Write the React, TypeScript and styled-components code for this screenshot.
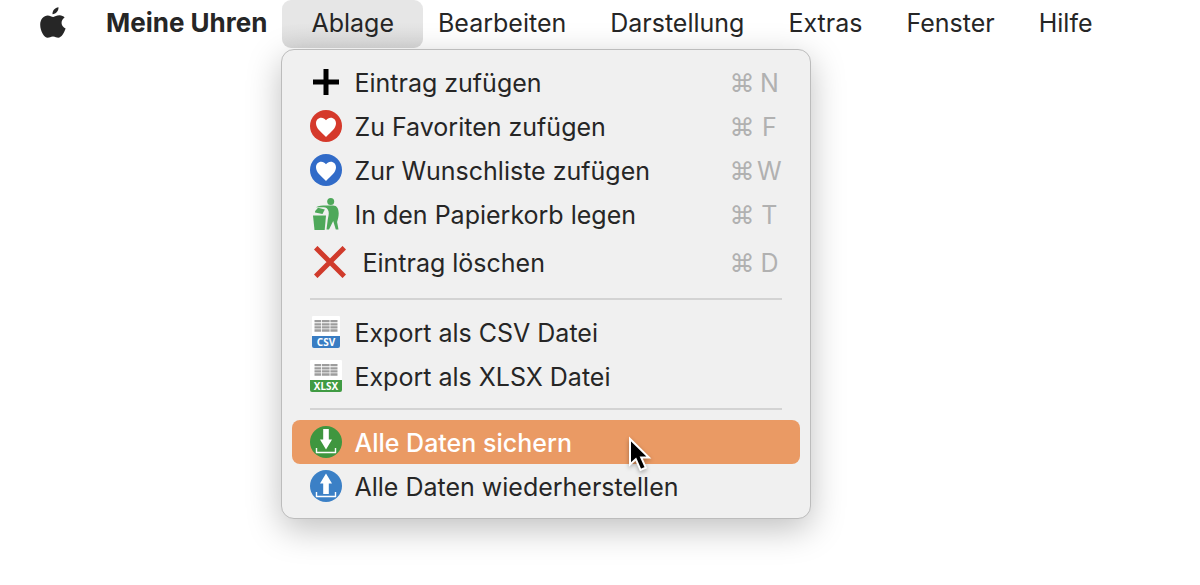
import React from "react";
import styled, { createGlobalStyle, css } from "styled-components";

const GlobalStyle = createGlobalStyle`
  *, *::before, *::after { box-sizing: border-box; }
  body {
    margin: 0;
    background: #fff;
    color: #262626;
    font-family: Inter, "Liberation Sans", sans-serif;
    font-size: 25px;
    line-height: 32px;
  }
  button { font: inherit; color: inherit; border: 0; background: none; }
`;

const Page = styled.main`
  min-height: 100vh;
`;

const MenuBar = styled.nav`
  display: flex;
  align-items: center;
  height: 48px;
  padding-left: 18px;
`;

const MenuSlot = styled.div`
  position: relative;
  height: 100%;
`;

const MenuTitle = styled.button<{ $bold?: boolean; $open?: boolean }>`
  display: flex;
  align-items: center;
  height: 100%;
  padding: 0 22px 2px;
  white-space: nowrap;
  ${(p) =>
    p.$bold &&
    css`
      font-size: 26px;
      font-weight: 700;
    `}
  ${(p) =>
    p.$open &&
    css`
      margin: 0 -7px;
      padding: 0 29px 2px;
      border-radius: 9px;
      background: linear-gradient(#e6e6e6 50%, #d9d9d9);
    `}
`;

const LogoButton = styled(MenuTitle)`
  padding-right: 18px;
`;

const Panel = styled.div`
  position: absolute;
  top: calc(100% + 1px);
  left: -8px;
  z-index: 1;
  width: 530px;
  padding: 10px;
  border: 1px solid #bcbcbc;
  border-radius: 13px;
  background: #f0f0f0;
  box-shadow: 0 10px 34px rgba(0, 0, 0, 0.25);
`;

const Entry = styled.button<{ $tall?: boolean; $active?: boolean }>`
  display: flex;
  align-items: center;
  gap: 12px;
  width: 100%;
  height: ${(p) => (p.$tall ? 52 : 44)}px;
  padding: 0 18px;
  border-radius: 8px;
  text-align: left;
  white-space: nowrap;
  ${(p) =>
    p.$active &&
    css`
      background: #ea9a64;
      color: #fff;
      font-weight: 500;
    `}
`;

const IconBox = styled.span<{ $wide?: boolean }>`
  display: flex;
  flex: none;
  justify-content: center;
  width: ${(p) => (p.$wide ? 40 : 32)}px;
  svg { display: block; }
`;

const EntryLabel = styled.span`
  flex: 1;
  padding-top: 2px;
`;

const Shortcut = styled.kbd`
  display: flex;
  align-items: center;
  gap: 2px;
  padding-top: 2px;
  color: #b1b1b1;
  font-family: inherit;
  font-size: 25px;
`;

const KeyLetter = styled.span`
  width: 26px;
  text-align: center;
`;

const Separator = styled.hr`
  height: 2px;
  margin: 10px 18px;
  border: 0;
  background: #d3d3d3;
`;

const Pointer = styled.svg`
  position: absolute;
  top: 385px;
  left: 345px;
  filter: drop-shadow(0 2px 2px rgba(0, 0, 0, 0.3));
  pointer-events: none;
`;

const AppleLogo = () => (
  <svg width="26" height="32" viewBox="1 0 26 32" fill="#262626" aria-hidden="true">
    <path d="M19.500 .3c.2 3.700-2.700 6.900-6 6.900C13.200 3.800 16 .7 19.500 .3Z" />
    <path d="M25.600 10.600c-4.500 2.800-3.800 9.100 1 11-1.400 4.200-4.200 9.200-7.300 9.200-2 0-2.800-1.300-5.300-1.300-2.500 0-3.400 1.300-5.300 1.300C5.400 30.800 1.200 24.100 1.200 17.700c0-5.800 3.700-9.300 7.500-9.300 2.300 0 3.900 1.500 5.600 1.500 1.600 0 3.400-1.600 6.300-1.600 2 0 3.900.9 5 2.300Z" />
  </svg>
);

const PlusIcon = () => (
  <svg width="32" height="32" viewBox="0 0 32 32" aria-hidden="true">
    <path d="M16 3v26M3 16h26" stroke="#000" strokeWidth="5" />
  </svg>
);

const HeartIcon = ({ color }: { color: string }) => (
  <svg width="32" height="32" viewBox="0 0 32 32" aria-hidden="true">
    <circle cx="16" cy="16" r="16" fill={color} />
    <path
      d="M16 10.300C14.800 8.600 13.100 7.700 11.300 7.700 8.200 7.700 6 10.100 6 13.300c0 5.200 4.600 8.200 10 13.800 5.400-5.600 10-8.600 10-13.800 0-3.200-2.200-5.600-5.300-5.600-1.800 0-3.500.9-4.700 2.600Z"
      fill="#fff"
    />
  </svg>
);

const TrashIcon = () => (
  <svg width="32" height="32" viewBox="0 0 32 32" fill="#4ea85a" aria-hidden="true">
    <circle cx="20.700" cy="3.500" r="3.500" />
    <path d="M3 17.500h13L14.700 32H4.500Z" />
    <path d="M5 13.200 8 9.800l6.800 1.700-2.300 4.500-7.500-1.400Z" />
    <path d="M6 9.200C9 7.400 13 7.500 17 7.500h6c4 0 5.700 3 5.700 8 0 3-.9 6-1.600 8.500l1.400 7.500h-2.700l-2.600-8.500-4.200 8.500h-2.500l1.200-9.500c.3-2.600 1.600-6 .9-8.500-.6-2.800-2.500-4.300-5-4.300Z" />
  </svg>
);

const CrossIcon = () => (
  <svg width="32" height="32" viewBox="0 0 32 32" aria-hidden="true">
    <path d="m1.700 1.700 28.600 28.600M30.300 1.700 1.700 30.300" stroke="#d03b2c" strokeWidth="5" />
  </svg>
);

const SheetIcon = ({ label, color, inset }: { label: string; color: string; inset: number }) => (
  <svg width="32" height="32" viewBox="0 0 32 32" aria-hidden="true">
    <rect x={inset} width={32 - inset * 2} height="31" rx="1" fill="#fff" />
    <path d="M4.500 5.200h23M4.500 8.300h23M4.500 11.400h23M4.500 14.500h23" stroke="#9d9d9d" strokeWidth="2.300" />
    <path d="M11.500 3v13M20 3v13" stroke="#fff" strokeWidth=".8" />
    <path
      d={`M${inset} 20H${32 - inset}V30q0 2-2 2H${inset + 2}q-2 0-2-2Z`}
      fill={color}
    />
    <text
      x="16"
      y="30"
      fill="#fff"
      fontFamily="Noto Sans, Open Sans, sans-serif"
      fontSize="10"
      fontWeight="700"
      textAnchor="middle"
    >
      {label}
    </text>
  </svg>
);

const TransferIcon = ({ color, up }: { color: string; up?: boolean }) => (
  <svg width="32" height="32" viewBox="0 0 32 32" aria-hidden="true">
    <circle cx="16" cy="16" r="16" fill={color} />
    <path
      d={up ? "M16 3.500 22 13.500h-3.200V24h-5.600V13.500H10Z" : "M13.200 3h5.600v10.500H22L16 23.500 10 13.500h3.200Z"}
      fill="#fff"
    />
    <path d="M6.500 22v4.500h19V22" fill="none" stroke="#fff" strokeWidth="1.400" />
  </svg>
);

const PointerArrow = () => (
  <Pointer width="26" height="38" viewBox="0 0 26 38" aria-hidden="true">
    <path
      d="M3 4v25.500l5.800-5.300L13.500 35l5.300-2.300-4.600-10.200h7.700Z"
      fill="#000"
      stroke="#fff"
      strokeWidth="2"
    />
  </Pointer>
);

type EntryData = {
  label: string;
  icon: React.ReactNode;
  shortcut?: string;
  large?: boolean;
  active?: boolean;
};

const groups: EntryData[][] = [
  [
    { label: "Eintrag zufügen", icon: <PlusIcon />, shortcut: "N" },
    { label: "Zu Favoriten zufügen", icon: <HeartIcon color="#d5392b" />, shortcut: "F" },
    { label: "Zur Wunschliste zufügen", icon: <HeartIcon color="#316bc8" />, shortcut: "W" },
    { label: "In den Papierkorb legen", icon: <TrashIcon />, shortcut: "T" },
    { label: "Eintrag löschen", icon: <CrossIcon />, shortcut: "D", large: true },
  ],
  [
    { label: "Export als CSV Datei", icon: <SheetIcon label="CSV" color="#397dc3" inset={2} /> },
    { label: "Export als XLSX Datei", icon: <SheetIcon label="XLSX" color="#409b43" inset={0} /> },
  ],
  [
    { label: "Alle Daten sichern", icon: <TransferIcon color="#3f963f" />, active: true },
    { label: "Alle Daten wiederherstellen", icon: <TransferIcon color="#3b80c6" up /> },
  ],
];

const FileMenu = () => (
  <Panel role="menu" aria-label="Ablage">
    {groups.map((group, index) => (
      <React.Fragment key={index}>
        {index > 0 && <Separator />}
        {group.map((entry) => (
          <Entry
            key={entry.label}
            type="button"
            role="menuitem"
            $tall={entry.large}
            $active={entry.active}
          >
            <IconBox $wide={entry.large}>{entry.icon}</IconBox>
            <EntryLabel>{entry.label}</EntryLabel>
            {entry.shortcut && (
              <Shortcut>
                <span>⌘</span>
                <KeyLetter>{entry.shortcut}</KeyLetter>
              </Shortcut>
            )}
          </Entry>
        ))}
      </React.Fragment>
    ))}
    <PointerArrow />
  </Panel>
);

export default function App() {
  return (
    <Page>
      <GlobalStyle />
      <MenuBar aria-label="Menüleiste">
        <LogoButton type="button" aria-label="Apple">
          <AppleLogo />
        </LogoButton>
        <MenuTitle type="button" $bold>
          Meine Uhren
        </MenuTitle>
        <MenuSlot>
          <MenuTitle type="button" aria-haspopup="menu" aria-expanded="true" $open>
            Ablage
          </MenuTitle>
          <FileMenu />
        </MenuSlot>
        {["Bearbeiten", "Darstellung", "Extras", "Fenster", "Hilfe"].map((title) => (
          <MenuTitle key={title} type="button">
            {title}
          </MenuTitle>
        ))}
      </MenuBar>
    </Page>
  );
}
